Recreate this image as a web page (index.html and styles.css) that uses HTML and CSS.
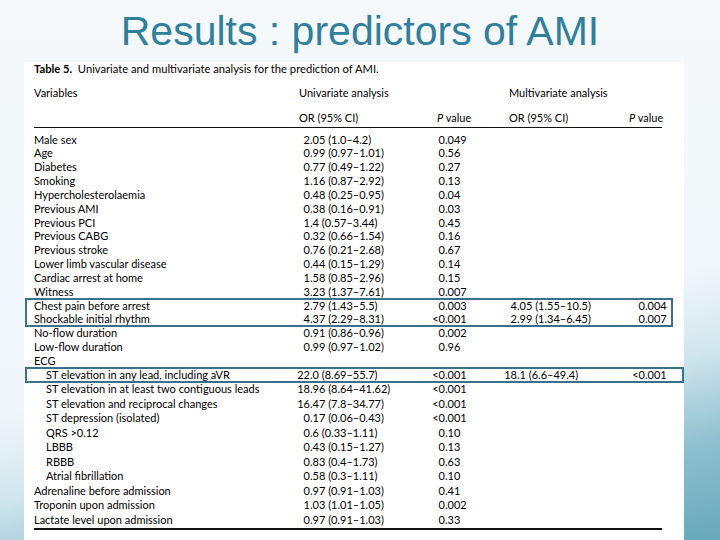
FILE: index.html
```html
<!DOCTYPE html>
<html>
<head>
<meta charset="utf-8">
<link rel="stylesheet" href="styles.css">
</head>
<body>
<div class="slide">
  <h1 class="title">Results : predictors of AMI</h1>
  <div class="panel">
    <div class="caption"><b>Table 5.</b>&nbsp; Univariate and multivariate analysis for the prediction of AMI.</div>
    <div class="row head1">
      <div>Variables</div>
      <div class="span2 uh">Univariate analysis</div>
      <div class="span2 mh">Multivariate analysis</div>
    </div>
    <div class="row head2">
      <div></div>
      <div class="uh">OR (95% CI)</div>
      <div class="ph"><i>P</i> value</div>
      <div class="mh">OR (95% CI)</div>
      <div class="pm"><i>P</i> value</div>
    </div>
    <div class="body">
      <div class="upper">
        <div class="row"><div>Male sex</div><div class="num"><span class="i">2</span>.05 (1.0–4.2)</div><div class="num"><span class="i">0</span>.049</div></div>
        <div class="row"><div>Age</div><div class="num"><span class="i">0</span>.99 (0.97–1.01)</div><div class="num"><span class="i">0</span>.56</div></div>
        <div class="row"><div>Diabetes</div><div class="num"><span class="i">0</span>.77 (0.49–1.22)</div><div class="num"><span class="i">0</span>.27</div></div>
        <div class="row"><div>Smoking</div><div class="num"><span class="i">1</span>.16 (0.87–2.92)</div><div class="num"><span class="i">0</span>.13</div></div>
        <div class="row"><div>Hypercholesterolaemia</div><div class="num"><span class="i">0</span>.48 (0.25–0.95)</div><div class="num"><span class="i">0</span>.04</div></div>
        <div class="row"><div>Previous AMI</div><div class="num"><span class="i">0</span>.38 (0.16–0.91)</div><div class="num"><span class="i">0</span>.03</div></div>
        <div class="row"><div>Previous PCI</div><div class="num"><span class="i">1</span>.4 (0.57–3.44)</div><div class="num"><span class="i">0</span>.45</div></div>
        <div class="row"><div>Previous CABG</div><div class="num"><span class="i">0</span>.32 (0.66–1.54)</div><div class="num"><span class="i">0</span>.16</div></div>
        <div class="row"><div>Previous stroke</div><div class="num"><span class="i">0</span>.76 (0.21–2.68)</div><div class="num"><span class="i">0</span>.67</div></div>
        <div class="row"><div>Lower limb vascular disease</div><div class="num"><span class="i">0</span>.44 (0.15–1.29)</div><div class="num"><span class="i">0</span>.14</div></div>
        <div class="row"><div>Cardiac arrest at home</div><div class="num"><span class="i">1</span>.58 (0.85–2.96)</div><div class="num"><span class="i">0</span>.15</div></div>
        <div class="row"><div>Witness</div><div class="num"><span class="i">3</span>.23 (1.37–7.61)</div><div class="num"><span class="i">0</span>.007</div></div>
        <div class="group g1">
          <div class="row"><div>Chest pain before arrest</div><div class="num"><span class="i">2</span>.79 (1.43–5.5)</div><div class="num"><span class="i">0</span>.003</div><div class="num"><span class="i">4</span>.05 (1.55–10.5)</div><div class="num"><span class="i">0</span>.004</div></div>
          <div class="row"><div>Shockable initial rhythm</div><div class="num"><span class="i">4</span>.37 (2.29–8.31)</div><div class="num"><span class="i">&lt;0</span>.001</div><div class="num"><span class="i">2</span>.99 (1.34–6.45)</div><div class="num"><span class="i">0</span>.007</div></div>
        </div>
        <div class="row"><div>No-flow duration</div><div class="num"><span class="i">0</span>.91 (0.86–0.96)</div><div class="num"><span class="i">0</span>.002</div></div>
        <div class="row"><div>Low-flow duration</div><div class="num"><span class="i">0</span>.99 (0.97–1.02)</div><div class="num"><span class="i">0</span>.96</div></div>
        <div class="row"><div>ECG</div></div>
      </div>
      <div class="lower">
        <div class="group g2">
          <div class="row"><div class="ind">ST elevation in any lead, including aVR</div><div class="num"><span class="i">22</span>.0 (8.69–55.7)</div><div class="num"><span class="i">&lt;0</span>.001</div><div class="num"><span class="i">18</span>.1 (6.6–49.4)</div><div class="num"><span class="i">&lt;0</span>.001</div></div>
        </div>
        <div class="row"><div class="ind">ST elevation in at least two contiguous leads</div><div class="num"><span class="i">18</span>.96 (8.64–41.62)</div><div class="num"><span class="i">&lt;0</span>.001</div></div>
        <div class="row"><div class="ind">ST elevation and reciprocal changes</div><div class="num"><span class="i">16</span>.47 (7.8–34.77)</div><div class="num"><span class="i">&lt;0</span>.001</div></div>
        <div class="row"><div class="ind">ST depression (isolated)</div><div class="num"><span class="i">0</span>.17 (0.06–0.43)</div><div class="num"><span class="i">&lt;0</span>.001</div></div>
        <div class="row"><div class="ind">QRS &gt;0.12</div><div class="num"><span class="i">0</span>.6 (0.33–1.11)</div><div class="num"><span class="i">0</span>.10</div></div>
        <div class="row"><div class="ind">LBBB</div><div class="num"><span class="i">0</span>.43 (0.15–1.27)</div><div class="num"><span class="i">0</span>.13</div></div>
        <div class="row"><div class="ind">RBBB</div><div class="num"><span class="i">0</span>.83 (0.4–1.73)</div><div class="num"><span class="i">0</span>.63</div></div>
        <div class="row"><div class="ind">Atrial fibrillation</div><div class="num"><span class="i">0</span>.58 (0.3–1.11)</div><div class="num"><span class="i">0</span>.10</div></div>
        <div class="row"><div>Adrenaline before admission</div><div class="num"><span class="i">0</span>.97 (0.91–1.03)</div><div class="num"><span class="i">0</span>.41</div></div>
        <div class="row"><div>Troponin upon admission</div><div class="num"><span class="i">1</span>.03 (1.01–1.05)</div><div class="num"><span class="i">0</span>.002</div></div>
        <div class="row"><div>Lactate level upon admission</div><div class="num"><span class="i">0</span>.97 (0.91–1.03)</div><div class="num"><span class="i">0</span>.33</div></div>
      </div>
    </div>
  </div>
</div>
</body>
</html>
```
FILE: styles.css
```css
html, body {
  margin: 0;
  padding: 0;
}
body {
  width: 720px;
  height: 540px;
  overflow: hidden;
  background: #f2f7fb;
}
.slide {
  width: 720px;
  height: 540px;
  display: flex;
  flex-direction: column;
  background:
    linear-gradient(168deg, rgba(255,255,255,0) 60%, rgba(190,220,230,0.6) 72%, rgba(130,185,202,0.9) 86%, #68a7ba 100%),
    linear-gradient(180deg, #f5f9fc 0%, #eef5f9 100%);
}
.title {
  margin: 0;
  height: 53px;
  padding-top: 9px;
  font-family: "Liberation Sans", Arial, sans-serif;
  font-weight: normal;
  font-size: 41px;
  line-height: 44px;
  color: #31809b;
  text-align: center;
  flex: none;
}
.panel {
  margin-left: 24px;
  width: 660px;
  flex: 1;
  min-height: 0;
  background: #ffffff;
  padding-left: 10px;
  box-sizing: border-box;
  font-family: "Lato", "Open Sans", sans-serif;
  font-size: 11px;
  color: #000000;
  display: flex;
  flex-direction: column;
}
.caption {
  line-height: 14px;
  width: 628px;
  font-size: 11.2px;
  flex: none;
}
.row {
  display: grid;
  grid-template-columns: 258px 135px 72px 128px 35px;
  height: 14px;
  line-height: 14px;
  white-space: nowrap;
  flex: none;
}
.upper .row {
  height: 13.85px;
}
.lower .row {
  height: 14.5px;
  line-height: 14.5px;
}
.head1 {
  margin-top: 10px;
}
.head1 .span2 {
  grid-column: span 2;
}
.head2 {
  margin-top: 11px;
  padding-bottom: 2px;
  border-bottom: 1.5px solid #111;
  width: 628px;
}
.uh { padding-left: 7px; }
.ph { padding-left: 10px; }
.mh { padding-left: 10px; }
.pm { padding-left: 2px; }
.body {
  margin-top: 4.5px;
  width: 628px;
  flex: none;
}
.lower {
  border-bottom: 2px solid #111;
  padding-bottom: 1px;
}
.ind {
  padding-left: 12px;
}
.num {
  display: flex;
}
.num .i {
  flex: none;
  width: 18px;
  text-align: right;
}
.group {
  position: relative;
}
.group::before {
  content: "";
  position: absolute;
  top: -1px;
  bottom: -1px;
  left: -9px;
  right: -11px;
  border: 2px solid #3b7089;
  pointer-events: none;
}
.g2::before {
  right: -22px;
}
```
